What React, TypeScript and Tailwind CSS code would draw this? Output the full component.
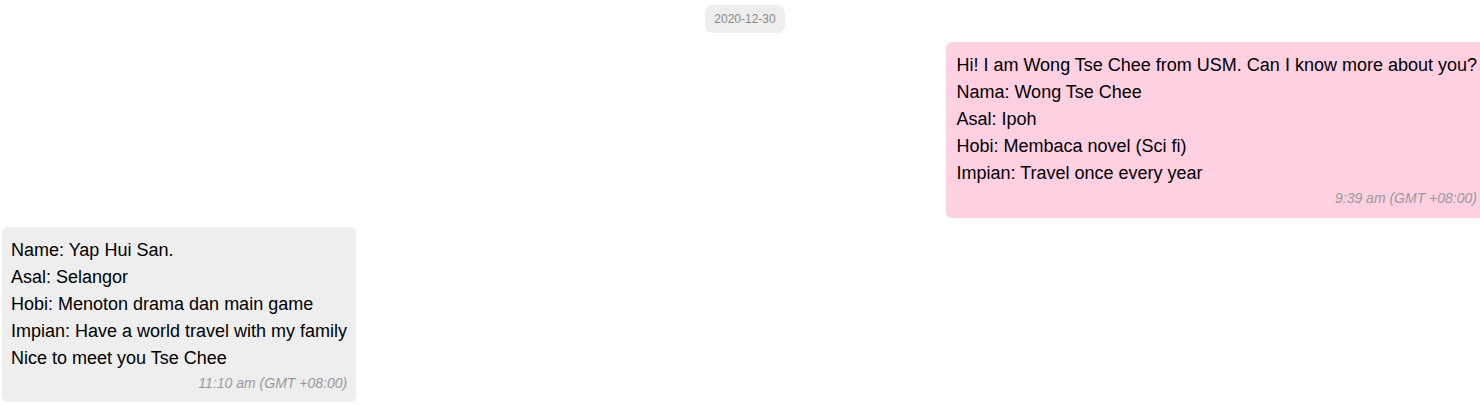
import React from "react";

const font = { fontFamily: '"Liberation Sans", Arial, sans-serif' };

export default function App() {
  const mine = [
    "Hi! I am Wong Tse Chee from USM. Can I know more about you?",
    "Nama: Wong Tse Chee",
    "Asal: Ipoh",
    "Hobi: Membaca novel (Sci fi)",
    "Impian: Travel once every year",
  ];
  const theirs = [
    "Name: Yap Hui San.",
    "Asal: Selangor",
    "Hobi: Menoton drama dan main game",
    "Impian: Have a world travel with my family",
    "Nice to meet you Tse Chee",
  ];
  return (
    <div className="w-[1480px] h-[405px] bg-white overflow-hidden flex flex-col" style={font}>
      <div className="flex justify-center pt-[5px] pl-[10px]">
        <div className="h-[28px] px-[9px] rounded-[8px] bg-[#eeeeee] text-[#8a8a8a] text-[12px] flex items-center">
          2020-12-30
        </div>
      </div>
      <div className="flex justify-end mt-[9px]">
        <div className="bg-[#ffd0e2] rounded-l-[6px] pl-[10px] pr-[3px] pt-[10px] pb-[9px] text-black">
          {mine.map((l) => (
            <div key={l} className="text-[18px] leading-[27px] whitespace-nowrap">{l}</div>
          ))}
          <div className="text-right italic text-[14px] leading-[22px] text-[#9a9a9a]">9:39 am (GMT +08:00)</div>
        </div>
      </div>
      <div className="flex justify-start mt-[9px] pl-[2px]">
        <div className="bg-[#eeeeee] rounded-[6px] pl-[9px] pr-[9px] pt-[10px] pb-[8px] text-black">
          {theirs.map((l) => (
            <div key={l} className="text-[18px] leading-[27px] whitespace-nowrap">{l}</div>
          ))}
          <div className="text-right italic text-[14px] leading-[22px] text-[#9a9a9a]">11:10 am (GMT +08:00)</div>
        </div>
      </div>
    </div>
  );
}
